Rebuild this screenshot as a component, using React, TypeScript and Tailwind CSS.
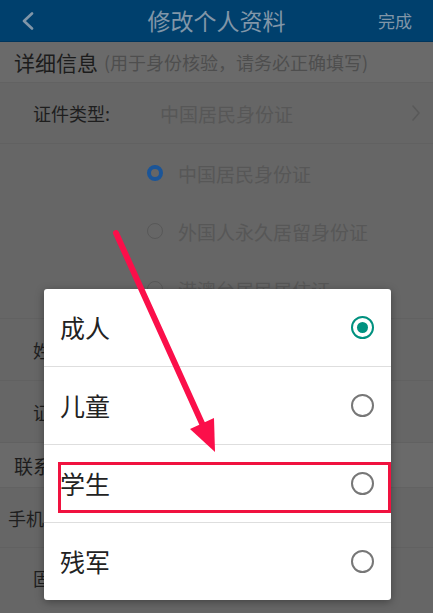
import React from "react";

function Radio({ checked }: { checked?: boolean }) {
  return checked ? (
    <span className="flex h-[23px] w-[23px] items-center justify-center rounded-full border-[2.5px] border-[#00917f]">
      <span className="h-[11px] w-[11px] rounded-full bg-[#00917f]" />
    </span>
  ) : (
    <span className="h-[23px] w-[23px] rounded-full border-[2.5px] border-[#777777]" />
  );
}

function BgRadio({ checked }: { checked?: boolean }) {
  return checked ? (
    <span className="h-[16px] w-[16px] rounded-full border-[4.5px] border-[#1b5598]" />
  ) : (
    <span className="h-[16px] w-[16px] rounded-full border-[1.5px] border-[#585858]" />
  );
}

export default function App() {
  const options = [
    { label: "成人", checked: true },
    { label: "儿童" },
    { label: "学生" },
    { label: "残军" },
  ];
  return (
    <div className="relative h-[613px] w-[433px] overflow-hidden bg-[#666666] font-['Noto_Sans_CJK_SC','Noto_Sans',sans-serif]">
      {/* header */}
      <div className="grid h-[42px] grid-cols-[1fr_auto_1fr] items-center border-b border-[#00355c] bg-[#00406d]">
        <div className="pl-[21px]">
          <svg width="14" height="18" viewBox="0 0 14 18" fill="none">
            <path d="M11 1.5 L3 9 L11 16.5" stroke="#8196a8" strokeWidth="2.6" strokeLinecap="round" strokeLinejoin="round" />
          </svg>
        </div>
        <div className="text-[23px] leading-none text-[#8196a8]">修改个人资料</div>
        <div className="pr-[21px] text-right text-[17px] leading-none text-[#8196a8]">完成</div>
      </div>

      {/* section header */}
      <div className="flex h-[41px] items-center border-b border-[#626262] bg-[#6a6a6a] pl-[14px]">
        <span className="text-[21px] leading-none text-[#1c1c1c]">详细信息</span>
        <span className="ml-[6px] text-[18px] leading-none text-[#4e4e4e]">(用于身份核验，请务必正确填写)</span>
      </div>

      {/* id type row */}
      <div className="flex h-[61px] items-center border-b border-[#616161] pr-[12px]">
        <span className="w-[160px] shrink-0 pl-[33px] text-[18px] leading-none text-[#1e1e1e]">证件类型:</span>
        <span className="flex-1 text-[19px] leading-none text-[#575757]">中国居民身份证</span>
        <svg width="10" height="18" viewBox="0 0 10 18" fill="none">
          <path d="M2 2 L8 9 L2 16" stroke="#595959" strokeWidth="1.6" strokeLinecap="round" strokeLinejoin="round" />
        </svg>
      </div>

      {/* id options */}
      <div className="flex flex-col border-b border-[#616161]">
        {[
          { t: "中国居民身份证", c: true },
          { t: "外国人永久居留身份证" },
          { t: "港澳台居民居住证" },
        ].map((o) => (
          <div key={o.t} className="flex h-[58px] items-center gap-[15px] pl-[147px]">
            <BgRadio checked={o.c} />
            <span className="text-[19px] leading-none text-[#575757]">{o.t}</span>
          </div>
        ))}
      </div>

      {/* more rows (partly hidden under the dialog) */}
      <div className="flex h-[62px] items-center border-b border-[#616161] pl-[33px] text-[18px] leading-none text-[#1e1e1e]">姓名:</div>
      <div className="flex h-[62px] items-center border-b border-[#616161] pl-[33px] text-[18px] leading-none text-[#1e1e1e]">证件号码:</div>
      <div className="flex h-[45px] items-center border-b border-[#626262] bg-[#6a6a6a] pl-[14px] text-[19px] leading-none text-[#1c1c1c]">联系方式</div>
      <div className="flex h-[60px] items-center border-b border-[#616161] pl-[8px] text-[18px] leading-none text-[#1e1e1e]">手机号码:</div>
      <div className="flex h-[60px] items-center pl-[33px] text-[18px] leading-none text-[#1e1e1e]">固定电话:</div>

      {/* dialog */}
      <div className="absolute left-[44px] top-[289px] w-[347px] overflow-hidden rounded-[3px] bg-white shadow-[0_2px_8px_rgba(0,0,0,0.35)]">
        {options.map((o, i) => (
          <div
            key={o.label}
            className={
              i < options.length - 1
                ? "flex h-[78px] items-center justify-between border-b border-[#dedede] pl-[16px] pr-[17px]"
                : "flex h-[77px] items-center justify-between pl-[16px] pr-[17px]"
            }
          >
            <span className="text-[25px] leading-none text-[#222222]">{o.label}</span>
            <Radio checked={o.checked} />
          </div>
        ))}
      </div>

      {/* annotation box */}
      <div className="absolute left-[58px] top-[462px] h-[51px] w-[333px] border-[3px] border-[#f0123f]" />

      {/* annotation arrow */}
      <svg className="pointer-events-none absolute left-0 top-0" width="433" height="613" viewBox="0 0 433 613">
        <line x1="116" y1="233" x2="205" y2="430" stroke="#fb0f4a" strokeWidth="6" strokeLinecap="round" />
        <polygon points="190,429 214,418 215,452" fill="#fb0f4a" />
      </svg>
    </div>
  );
}
